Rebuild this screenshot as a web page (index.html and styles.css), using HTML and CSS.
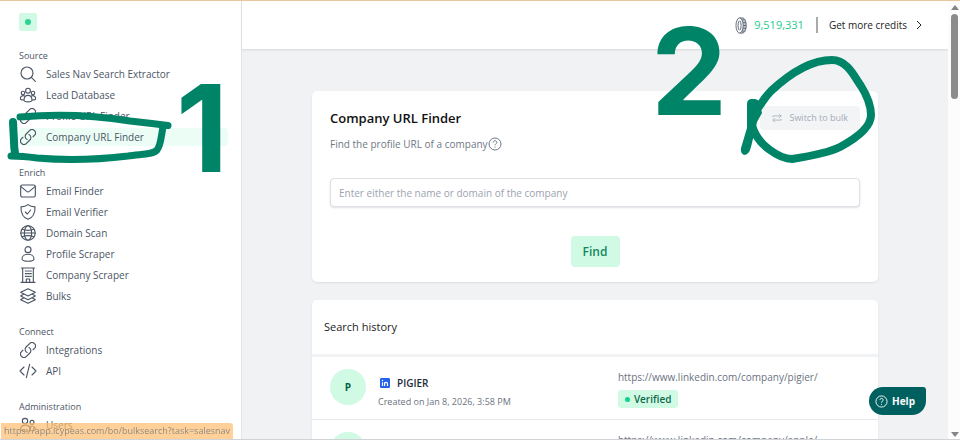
FILE: index.html
```html
<!DOCTYPE html>
<html lang="en">
<head>
<meta charset="utf-8">
<title>Company URL Finder</title>
<link rel="stylesheet" href="styles.css">
</head>
<body>
<svg class="defs" aria-hidden="true">
  <symbol id="link" viewBox="1.500 1.500 21 21"><path stroke-width="1.500" d="M13.190 8.688a4.500 4.500 0 0 1 1.242 7.244l-4.500 4.500a4.500 4.500 0 0 1-6.364-6.364l1.757-1.757m13.350-.622 1.757-1.757a4.500 4.500 0 0 0-6.364-6.364l-4.500 4.500a4.500 4.500 0 0 0 1.242 7.244"/></symbol>
  <symbol id="in" viewBox="0 0 12 12"><rect width="12" height="12" rx="1.500" fill="#2463eb"/><path d="M3 5v4.500M5.500 5v4.500M5.500 7c0-2 3.500-2.500 3.500 0v2.500" stroke="#fff" stroke-width="1.400" fill="none"/><circle cx="3" cy="2.900" r=".9" fill="#fff"/></symbol>
</svg>
<div class="app">
  <aside class="sidebar">
    <div class="logo"></div>
    <nav>
      <section>
        <h2>Source</h2>
        <ul>
          <li><a href="#"><svg class="icon" viewBox="0 0 24 24"><circle cx="10.500" cy="10.500" r="9"/><path d="M17 17l6 6"/></svg>Sales Nav Search Extractor</a></li>
          <li><a href="#"><svg class="icon" viewBox="0 0 24 24"><circle cx="12" cy="5.500" r="3.600"/><circle cx="4.500" cy="9" r="2.600"/><circle cx="19.500" cy="9" r="2.600"/><path d="M6 20c0-10 12-10 12 0 0 3-12 3-12 0ZM7 13.500c-4-1.500-6.500 1-6.500 4 0 1.500 2.500 2 5.500 2M17 13.500c4-1.500 6.500 1 6.500 4 0 1.500-2.500 2-5.500 2"/></svg>Lead Database</a></li>
          <li><a href="#"><svg class="icon"><use href="#link"/></svg>Profile URL Finder</a></li>
          <li><a href="#" class="active"><svg class="icon"><use href="#link"/></svg>Company URL Finder</a></li>
        </ul>
      </section>
      <section>
        <h2>Enrich</h2>
        <ul>
          <li><a href="#"><svg class="icon" viewBox="0 0 24 24"><rect x="1" y="3" width="22" height="18" rx="2.500"/><path d="M1.500 5.500L10 12.500q2 1.500 4 0l8.500-7"/></svg>Email Finder</a></li>
          <li><a href="#"><svg class="icon" viewBox="0 0 24 24"><path d="M12 1c3 2.500 6.500 3.300 10.500 3.300C23 14 20 20 12 23 4 20 1 14 1.500 4.300 5.500 4.300 9 3.500 12 1ZM8 12l3 3 5-6"/></svg>Email Verifier</a></li>
          <li><a href="#"><svg class="icon" viewBox="0 0 24 24"><circle cx="12" cy="12" r="10.800"/><ellipse cx="12" cy="12" rx="5.500" ry="10.800"/><path d="M1.200 12h21.600M3 6.500q9 3 18 0M3 17.500q9-3 18 0"/></svg>Domain Scan</a></li>
          <li><a href="#"><svg class="icon" viewBox="0 0 24 24"><circle cx="12" cy="5.500" r="4.500"/><path d="M3 19.500C3 10 21 10 21 19.500 21 24 3 24 3 19.500Z"/></svg>Profile Scraper</a></li>
          <li><a href="#"><svg class="icon" viewBox="0 0 24 24"><path d="M2 1.500h20M4 1.500V23M20 1.500V23M1.500 23h21M9.500 23v-5h5v5M8 6h2M11.500 6h2M15 6h2M8 10h2M11.500 10h2M15 10h2M8 14h2M11.500 14h2M15 14h2"/></svg>Company Scraper</a></li>
          <li><a href="#"><svg class="icon" viewBox="0 0 24 24"><path d="M12 1l11 5.500L12 12 1 6.500ZM5 9.500l-4 2.500 11 5.500L23 12l-4-2.500M5 15l-4 2.500L12 23l11-5.500L19 15"/></svg>Bulks</a></li>
        </ul>
      </section>
      <section>
        <h2>Connect</h2>
        <ul>
          <li><a href="#"><svg class="icon"><use href="#link"/></svg>Integrations</a></li>
          <li><a href="#"><svg class="icon" viewBox="0 0 24 24"><path d="M6 6l-6 6 6 6M18 6l6 6-6 6M14.500 2l-5 20"/></svg>API</a></li>
        </ul>
      </section>
      <section>
        <h2>Administration</h2>
        <ul>
          <li><a href="#"><svg class="icon" viewBox="0 0 24 24"><circle cx="7.500" cy="6" r="4"/><circle cx="18" cy="8" r="3"/><path d="M1 19c0-9 14-9 14 0 0 3-14 3-14 0ZM15 14.500c4-2.500 8 0 8 4 0 2-4 2.500-8 1.800"/></svg>Users</a></li>
        </ul>
      </section>
    </nav>
  </aside>

  <div class="page">
    <header class="topbar">
      <svg class="coin" viewBox="0 0 12 18"><path class="edge" d="M4.500 1h3C10 1 11.500 4.500 11.500 9S10 17 7.500 17h-3"/><ellipse class="face" cx="4.500" cy="9" rx="3.800" ry="8"/><ellipse cx="4.500" cy="9" rx="1.600" ry="5"/><path d="M7.500 3h2.500M8.300 6h3M8.500 9h3M8.300 12h3M7.500 15h2.500"/></svg>
      <span class="credits">9,519,331</span>
      <a class="more" href="#">Get more credits<svg viewBox="0 0 6 10"><path d="M1 1l4 4-4 4"/></svg></a>
    </header>
    <main>
      <form class="card finder">
        <div class="heading">
          <h1>Company URL Finder</h1>
          <button type="button" class="bulk"><svg viewBox="0 0 12 12"><path d="M1 5V3.500h10M8.500 1L11 3.500 8.500 6M11 7v1.500H1M3.500 6L1 8.500 3.500 11"/></svg>Switch to bulk</button>
        </div>
        <label for="company">Find the profile URL of a company<svg viewBox="0 0 14 14"><circle cx="7" cy="7" r="6"/><path d="M5.200 5.500c0-2.500 3.800-2.300 3.600 0C8.700 6.700 7 6.700 7 8.300M7 9.600v1"/></svg></label>
        <input id="company" type="text" placeholder="Enter either the name or domain of the company">
        <button type="button" class="find">Find</button>
      </form>
      <section class="card history">
        <h2>Search history</h2>
        <ul>
          <li>
            <span class="avatar">P</span>
            <div class="who"><strong><svg><use href="#in"/></svg>PIGIER</strong><small>Created on Jan 8, 2026, 3:58 PM</small></div>
            <div class="result"><a href="#">https://www.linkedin.com/company/pigier/</a><span class="badge">Verified</span></div>
          </li>
          <li>
            <span class="avatar"></span>
            <div class="who"></div>
            <div class="result"><a href="#">https://www.linkedin.com/company/apple/</a></div>
          </li>
        </ul>
      </section>
    </main>
  </div>
  <div class="scrollbar"><i class="up"></i><i class="thumb"></i><i class="down"></i></div>
</div>

<button type="button" class="help"><svg viewBox="0 0 14 14"><circle cx="7" cy="7" r="6"/><path d="M5.200 5.500c0-2.500 3.800-2.300 3.600 0C8.700 6.700 7 6.700 7 8.300M7 9.600v1"/></svg>Help</button>
<div class="status">https://app.icypeas.com/bo/bulksearch?task=salesnav</div>

<svg class="marks" viewBox="0 0 960 440" width="960" height="440">
  <path stroke-width="7" d="M20 117C65 113 105 117 130 121Q148 123 168 125.500M163 127C161 137 161 145 157 150C153 155 140 154 128 156C95 160 60 160 37 158Q22 156 11 156"/>
  <path stroke-width="8" d="M13 122L14 141Q14 148 15 153"/>
  <path stroke-width="8" d="M755 112C763 102 764 98 771 91C786 77 808 60 832 60C848 60 855 78 861 86C866 94 871 104 871 115C871 128 853 140 840 147C828 153 805 157 792 159C781 159 757 146 752 125"/>
  <path class="fill" d="M747 104Q747 99 752 99L755 99Q760 100 760 104L762 113L757 122L751 147Q749 155 744 155Q740 153 741 148L747 128Z"/>
  <text x="176" y="172">1</text>
  <text x="651" y="115">2</text>
</svg>
</body>
</html>
```
FILE: styles.css
```css
* { box-sizing: border-box; }
body, h1, h2, ul { margin: 0; padding: 0; }
body {
  font: 11px/16px "Open Sans", "Noto Sans", sans-serif;
  color: #4b5565;
  overflow: hidden;
}
ul { list-style: none; }
a { color: inherit; text-decoration: none; }
button, input { font: inherit; border: 0; }
svg { fill: none; stroke: currentColor; flex: none; }
.defs { position: absolute; width: 0; height: 0; }

.app {
  display: flex;
  height: 100vh;
  overflow: hidden;
  border-top: 1px solid #e8c59c;
  border-bottom: 1px solid #d2d3d6;
}
.sidebar {
  flex: none;
  width: 242px;
  padding: 12px 13px 0 19px;
  background: #fff;
  border-right: 1px solid #e3e5e8;
}
.logo {
  display: flex;
  width: 18px;
  height: 18px;
  border-radius: 2px;
  background: #d1fae5;
}
.logo::before {
  content: "";
  width: 6px;
  height: 6px;
  margin: auto;
  border-radius: 50%;
  background: #2fd197;
}
nav { display: flex; flex-direction: column; gap: 19px; margin-top: 17px; }
nav h2 { font-size: 9px; font-weight: 500; line-height: 16px; margin-bottom: 1px; }
nav ul { display: flex; flex-direction: column; gap: 3px; }
nav a { display: flex; align-items: center; gap: 10px; height: 18px; padding-left: 1px; border-radius: 4px; font-size: 10px; }
nav .active { background: #ecfdf5; }
.icon { width: 16px; height: 16px; stroke-width: 1.700; stroke-linejoin: round; stroke-linecap: round; overflow: visible; }

.page { flex: 1; min-width: 0; background: #f1f2f4; }
.topbar {
  display: flex;
  align-items: center;
  justify-content: flex-end;
  height: 48px;
  padding-right: 26px;
  background: #fff;
  color: #222;
  box-shadow: 0 1px 2px #d5d7da;
}
.coin { width: 12px; height: 17px; margin-right: 7px; color: #5c6675; }
.coin .edge { fill: #c3c8cf; }
.coin .face { fill: #fff; }
.credits { color: #25cb8b; padding-right: 12px; border-right: 2px solid #aaa; }
.more { display: flex; align-items: center; gap: 9px; padding-left: 11px; font-size: 10px; }
.more svg { width: 6px; height: 10px; }

main { display: flex; flex-direction: column; gap: 18px; padding: 42px 70px 0; }
.card { background: #fff; border-radius: 5px; box-shadow: 0 1px 2px #dcdee1; }
.finder { display: flex; flex-direction: column; padding: 15px 18px; }
.heading { display: flex; justify-content: space-between; align-items: center; }
h1 { color: #111; font-size: 13px; font-weight: 600; }
.bulk {
  display: flex;
  align-items: center;
  gap: 7px;
  height: 24px;
  padding: 0 12px;
  border-radius: 4px;
  background: #f3f4f6;
  color: #a5acb8;
  font-size: 9px;
}
.bulk svg { width: 10px; height: 10px; }
.finder label { display: flex; align-items: center; margin-top: 6px; color: #6f7886; font-size: 10px; }
.finder label svg { width: 14px; height: 14px; }
.finder input {
  height: 29px;
  margin: 26px 0 29px;
  padding: 0 8px;
  border: 1px solid #dfe0e4;
  border-radius: 4px;
  box-shadow: 0 1px 2px #e0e1e5;
  font-size: 10px;
}
.finder input::placeholder { color: #9ca3af; }
.find {
  align-self: center;
  width: 49px;
  height: 31px;
  padding: 0;
  border-radius: 4px;
  background: #d1fae5;
  color: #12875f;
  font-size: 12px;
  font-weight: 600;
}

.history h2 {
  padding: 19px 12px;
  color: #222;
  font-size: 11px;
  font-weight: 400;
  border-bottom: 3px solid #f1f2f4;
}
.history li {
  display: grid;
  grid-template-columns: 36px 16fr 17fr;
  column-gap: 12px;
  height: 63px;
  padding: 12px 18px 0;
  border-bottom: 1px solid #e7e8eb;
}
.avatar {
  display: grid;
  place-items: center;
  width: 36px;
  height: 36px;
  border-radius: 50%;
  background: #d1fae5;
  color: #066047;
  font-size: 10px;
  font-weight: 700;
}
.who, .result { display: flex; flex-direction: column; align-items: flex-start; }
.who { padding-top: 6px; gap: 3px; }
.who strong { display: flex; align-items: center; gap: 7px; padding-left: 2px; color: #222b38; font-size: 10px; font-weight: 600; }
.who svg { width: 10px; height: 10px; stroke: none; }
.who small { color: #6b7280; font-size: 9px; }
.result a { color: #6b7280; font-size: 10px; }
.badge {
  display: flex;
  align-items: center;
  gap: 4px;
  height: 18px;
  margin-top: 5px;
  padding: 0 7px;
  border-radius: 3px;
  background: #d1fae5;
  color: #106b4b;
  font-size: 10px;
  font-weight: 600;
}
.badge::before { content: ""; width: 5px; height: 5px; border-radius: 50%; background: #12d18e; }

.scrollbar {
  flex: none;
  display: flex;
  flex-direction: column;
  align-items: center;
  width: 12px;
  padding: 4px 1px 2px 2px;
  background: #fcfcfc;
}
.scrollbar .up, .scrollbar .down { border: 4px solid transparent; }
.scrollbar .up { border-top: 0; border-bottom: 5px solid #858585; }
.scrollbar .down { border-bottom: 0; border-top: 5px solid #858585; margin-top: auto; }
.thumb { width: 7px; height: 85px; margin-top: 4px; border-radius: 4px; background: #8b8b8b; }

.help {
  position: fixed;
  right: 34px;
  bottom: 25px;
  display: flex;
  align-items: center;
  gap: 4px;
  height: 28px;
  padding: 0 11px 0 6px;
  border-radius: 14px 3px 14px 14px;
  background: #006060;
  color: #fff;
  font-size: 10px;
  font-weight: 700;
}
.help svg { width: 13px; height: 13px; }
.status {
  position: fixed;
  left: 1px;
  bottom: 1px;
  padding: 0 3px;
  border-radius: 0 3px 0 0;
  background: rgb(255 190 110 / 70%);
  color: #8f8a83;
  font-size: 9px;
}
.marks { position: absolute; top: 0; left: 0; color: #008467; stroke-linecap: round; stroke-linejoin: round; pointer-events: none; }
.marks text { font: 700 121px Inter, sans-serif; fill: currentColor; stroke: none; }
.marks .fill { fill: currentColor; stroke: none; }
```
